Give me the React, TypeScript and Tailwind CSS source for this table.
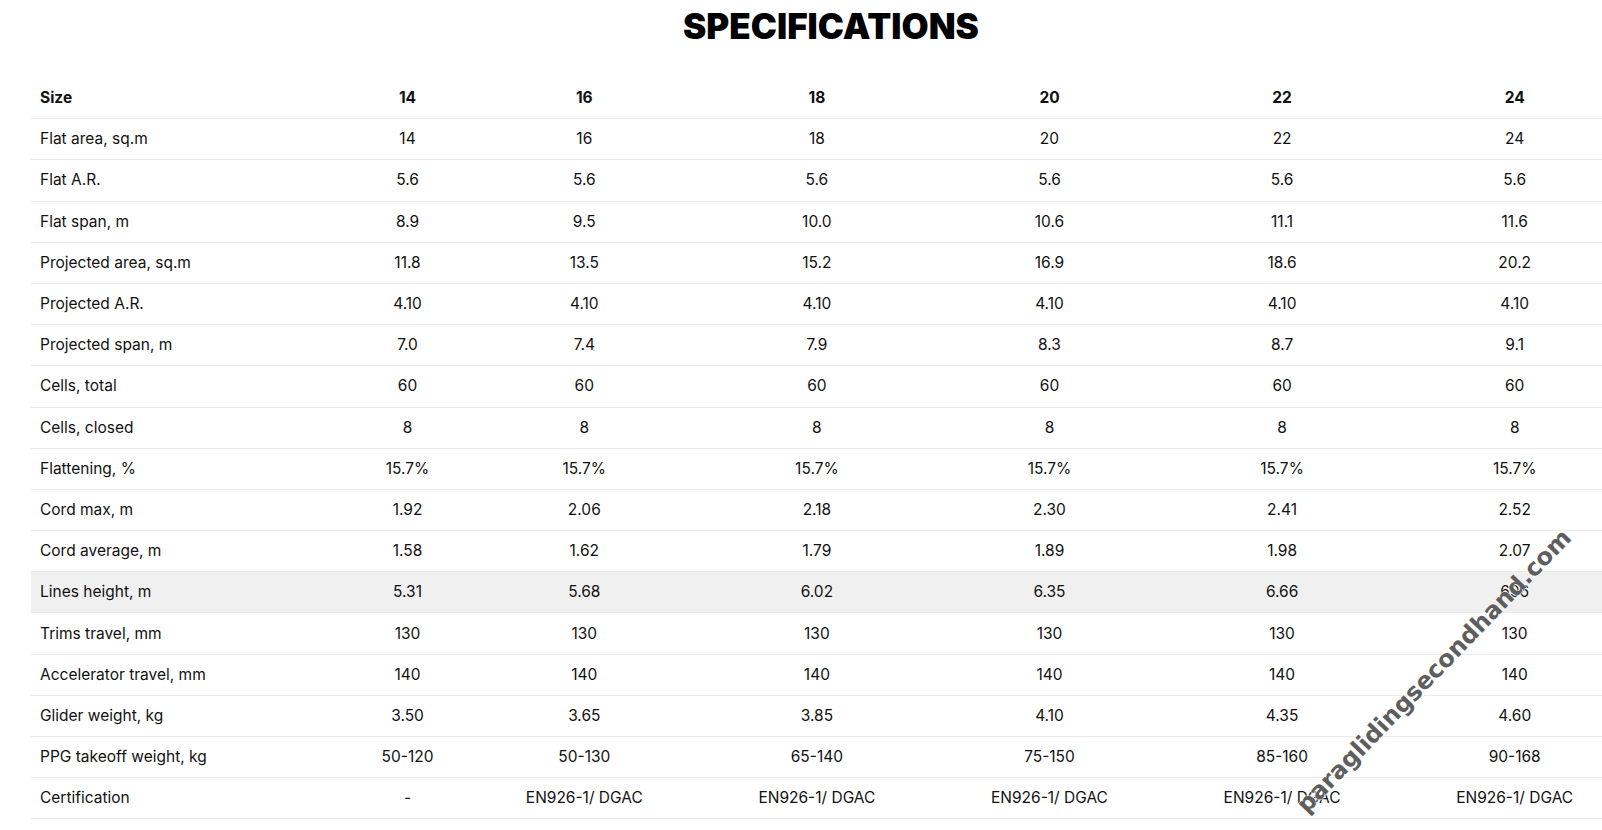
import React from "react"

const sizes = ["14", "16", "18", "20", "22", "24"]

const rows: [string, string[]][] = [
  ["Flat area, sq.m", ["14", "16", "18", "20", "22", "24"]],
  ["Flat A.R.", ["5.6", "5.6", "5.6", "5.6", "5.6", "5.6"]],
  ["Flat span, m", ["8.9", "9.5", "10.0", "10.6", "11.1", "11.6"]],
  ["Projected area, sq.m", ["11.8", "13.5", "15.2", "16.9", "18.6", "20.2"]],
  ["Projected A.R.", ["4.10", "4.10", "4.10", "4.10", "4.10", "4.10"]],
  ["Projected span, m", ["7.0", "7.4", "7.9", "8.3", "8.7", "9.1"]],
  ["Cells, total", ["60", "60", "60", "60", "60", "60"]],
  ["Cells, closed", ["8", "8", "8", "8", "8", "8"]],
  ["Flattening, %", ["15.7%", "15.7%", "15.7%", "15.7%", "15.7%", "15.7%"]],
  ["Cord max, m", ["1.92", "2.06", "2.18", "2.30", "2.41", "2.52"]],
  ["Cord average, m", ["1.58", "1.62", "1.79", "1.89", "1.98", "2.07"]],
  ["Lines height, m", ["5.31", "5.68", "6.02", "6.35", "6.66", "696"]],
  ["Trims travel, mm", ["130", "130", "130", "130", "130", "130"]],
  ["Accelerator travel, mm", ["140", "140", "140", "140", "140", "140"]],
  ["Glider weight, kg", ["3.50", "3.65", "3.85", "4.10", "4.35", "4.60"]],
  ["PPG takeoff weight, kg", ["50-120", "50-130", "65-140", "75-150", "85-160", "90-168"]],
  ["Certification", ["-", "EN926-1/ DGAC", "EN926-1/ DGAC", "EN926-1/ DGAC", "EN926-1/ DGAC", "EN926-1/ DGAC"]],
]

export default function App() {
  return (
    <div className="relative w-full min-h-[830px] overflow-hidden bg-white text-[#111] font-['Inter',sans-serif]">
      <div className="ml-[31px] w-[1600px]">
        <h1 className="pt-[6px] text-center text-[35px] leading-[40px] font-black text-black">
          SPECIFICATIONS
        </h1>
        <table className="mt-[32px] w-[1600px] table-fixed border-collapse text-[15.5px] leading-5">
          <colgroup>
            <col className="w-[316px]" />
            <col className="w-[121px]" />
            <col className="w-[232.6px]" />
            <col className="w-[232.6px]" />
            <col className="w-[232.6px]" />
            <col className="w-[232.6px]" />
            <col className="w-[232.6px]" />
          </colgroup>
          <thead>
            <tr className="border-b border-[#ebebeb]">
              <th className="py-[10.1px] pl-[9px] text-left font-bold">Size</th>
              {sizes.map((s) => (
                <th key={s} className="py-[10.1px] text-center font-bold">
                  {s}
                </th>
              ))}
            </tr>
          </thead>
          <tbody>
            {rows.map(([label, vals]) => (
              <tr
                key={label}
                className={
                  label === "Lines height, m"
                    ? "border-b border-[#ebebeb] bg-[#f0f0f0]"
                    : "border-b border-[#ebebeb]"
                }
              >
                <td className="py-[10.1px] pl-[9px] text-left">{label}</td>
                {vals.map((v, i) => (
                  <td key={i} className="py-[10.1px] text-center">
                    {v}
                  </td>
                ))}
              </tr>
            ))}
          </tbody>
        </table>
      </div>
      <div className="pointer-events-none absolute left-[1434px] top-[671px] -translate-x-1/2 -translate-y-1/2 -rotate-[46deg] whitespace-nowrap font-['DejaVu_Sans',sans-serif] text-[24px] font-bold text-[#5e5e5e] [text-shadow:0_0_2px_#fff,0_0_2px_#fff,0_0_1px_#fff]">
        paraglidingsecondhand.com
      </div>
    </div>
  )
}
